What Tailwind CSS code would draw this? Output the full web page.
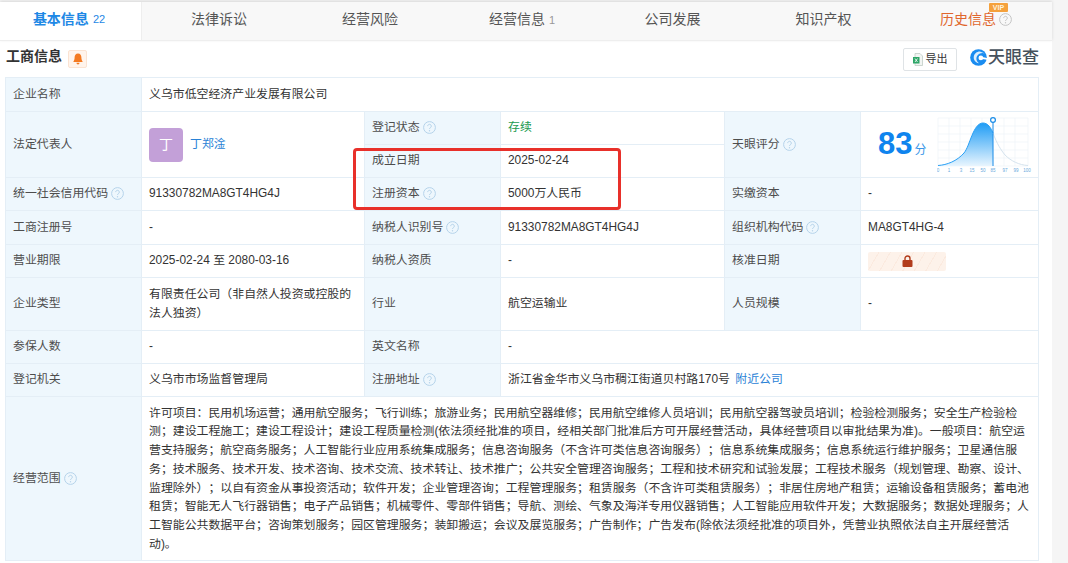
<!DOCTYPE html>
<html lang="zh-CN">
<head>
  <meta charset="UTF-8" />
  <title>工商信息</title>
  <script src="https://cdn.jsdelivr.net/npm/@tailwindcss/browser@4"></script>
</head>
<body class="bg-[#f5f5f5] text-[#333] text-[11.9px] font-['Liberation_Sans','Noto_Sans_CJK_SC',sans-serif] [text-spacing-trim:space-all] overflow-hidden">

  <!-- shared help icon -->
  <svg class="hidden">
    <symbol id="help" viewBox="0 0 13 13">
      <circle cx="6.500" cy="6.500" r="5.900" fill="none" stroke="currentColor" />
      <path d="M4.700 5.100a1.800 1.800 0 1 1 2.800 1.500c-.7.4-1 .8-1 1.400" fill="none" stroke="currentColor" />
      <circle cx="6.500" cy="9.700" r=".7" fill="currentColor" />
    </symbol>
  </svg>

  <div class="relative w-[1052px] h-[563px] bg-white">
    <!-- Tabs -->
    <div class="h-[39px] mt-[2px] flex items-center bg-[#f8f8f8] border-b border-[#eee] text-[14px] text-[#555] shadow-[0_-1px_3px_rgba(0,0,0,0.12)]">
      <div class="w-[142px] h-full pb-[3px] flex items-center justify-center gap-1 pr-[3px] bg-white text-[#1e88e5] font-bold border-r border-[#eee]">基本信息 <span class="text-[11px] font-normal">22</span></div>
      <div class="w-[154px] pb-[3px] text-center">法律诉讼</div>
      <div class="w-[148px] pb-[3px] text-center">经营风险</div>
      <div class="w-[156px] pb-[3px] text-center">经营信息 <span class="text-[11px] text-[#999]">1</span></div>
      <div class="w-[145px] pb-[3px] text-center">公司发展</div>
      <div class="w-[157px] pb-[3px] text-center">知识产权</div>
      <div class="relative w-[148px] h-full pb-[3px] flex items-center justify-center gap-[3px] text-[#e0662d]">
        历史信息
        <svg class="w-[13px] h-[13px] text-[#c4c4c4]"><use href="#help" /></svg>
        <span class="absolute top-[1px] left-[87px] w-[19px] h-[9px] rounded-[1px] bg-[#f5a13c] text-[#fff3df] text-[7px] leading-[9px] text-center font-bold">VIP</span>
      </div>
    </div>

    <!-- Section title -->
    <div class="h-[36px] flex items-center px-[6px]">
      <h2 class="mb-[5px] text-[14px] font-bold text-[#333]">工商信息</h2>
      <span class="ml-[6px] mt-[-1px] w-[19px] h-[18px] flex items-center justify-center bg-[#fff4ec] border border-[#fbe3d2] rounded-[2px]">
        <svg class="w-[10px] h-[12px]" viewBox="0 0 10 12"><path d="M5 .5c2.300 0 3.400 1.800 3.400 4 0 2 .5 3 1.100 3.800v.7H.5v-.7c.6-.8 1.100-1.800 1.100-3.800 0-2.200 1.100-4 3.400-4zM3.500 9.800h3c0 1.100-.7 1.700-1.500 1.700s-1.500-.6-1.500-1.700z" fill="#f47a21" /></svg>
      </span>
      <button class="ml-auto w-[54px] h-[23px] flex items-center justify-center gap-[3px] border border-[#dfe3e6] rounded-[2px] text-[11px] text-[#333] bg-white">
        <svg class="w-[10px] h-[13px]" viewBox="0 0 10 13"><path d="M2 .5h5l2.500 2.500v9.500H2z" fill="#f2f5f3" stroke="#b9c6be" stroke-width=".7" /><rect x="0" y="4" width="6.500" height="6.500" fill="#2ea668" /><path d="M2 5.500l2.500 3.500M4.500 5.500L2 9" stroke="#fff" stroke-width=".8" /></svg>
        导出
      </button>
      <div class="ml-[13px] mr-[7px] mb-[3px] flex items-center gap-[1px]">
        <svg class="w-[17px] h-[17px]" viewBox="0 0 18 18">
          <circle cx="9" cy="9" r="8.800" fill="#1a8cf0" />
          <path d="M18 5.500C14 3.500 9.500 4 7.500 7.500c-1.500 2.800-.5 6 2 7.500-3.500-.3-6-3.500-5.500-6.800C4.600 4.800 7.500 2.500 11 2.800z" fill="#fff" opacity=".85" />
          <circle cx="11.500" cy="9.500" r="2.500" fill="#fff" />
          <path d="M13 8.500l5 1v2l-5-1z" fill="#fff" />
        </svg>
        <span class="text-[17px] font-medium text-[#46515c] leading-none">天眼查</span>
      </div>
    </div>

    <!-- Info table -->
    <table class="ml-[5px] w-[1034px] table-fixed border-collapse border border-[#e4eef6] [&_td]:border [&_td]:border-[#e4eef6] [&_td]:px-[7px] [&_td]:py-0 [&_td.l]:bg-[#eef7fd] [&_td.l]:text-[#4d4d4d]">
      <colgroup>
        <col class="w-[136px]" /><col class="w-[223px]" /><col class="w-[136px]" /><col class="w-[224px]" /><col class="w-[136px]" /><col />
      </colgroup>
      <tbody>
        <tr class="h-[34px]">
          <td class="l">企业名称</td>
          <td colspan="5">义乌市低空经济产业发展有限公司</td>
        </tr>
        <tr class="h-[33px]">
          <td class="l" rowspan="2">法定代表人</td>
          <td rowspan="2">
            <div class="flex items-center gap-[7px]">
              <span class="w-[34px] h-[34px] flex items-center justify-center rounded-[4px] bg-[#c3a0d8] text-white text-[14px]">丁</span>
              <a class="text-[#2a82d6]" href="#">丁郑淦</a>
            </div>
          </td>
          <td class="l">
            <span class="flex items-center gap-[3px]">登记状态 <svg class="w-[13px] h-[13px] text-[#b5d3ea]"><use href="#help" /></svg></span>
          </td>
          <td class="text-[#1a9a50]">存续</td>
          <td class="l" rowspan="2">
            <span class="flex items-center gap-[3px]">天眼评分 <svg class="w-[13px] h-[13px] text-[#b5d3ea]"><use href="#help" /></svg></span>
          </td>
          <td rowspan="2" class="relative">
            <div class="flex items-end h-[38px] mb-[2px] pl-[10px]">
              <span class="text-[31px] leading-[38px] font-bold text-[#0f84ee]">83</span>
              <span class="text-[12px] leading-[26px] ml-[2px] text-[#3c97e8]">分</span>
            </div>
            <svg class="absolute left-[76px] top-[5px] w-[96px] h-[58px]" viewBox="0 0 96 58">
              <defs>
                <linearGradient id="area" x1="0" y1="0" x2="0" y2="1">
                  <stop offset="0" stop-color="#1f9cf5" />
                  <stop offset="1" stop-color="#e8f5fe" />
                </linearGradient>
              </defs>
              <path d="M1 1h90v48H1z M1 9h90M1 17h90M1 25h90M1 33h90M1 41h90M12 1v48M23 1v48M34 1v48M45 1v48M56 1v48M67 1v48M78 1v48" fill="none" stroke="#eef3f8" stroke-width=".7" />
              <path d="M1 48.500C10 48 20 44 27 36 33 29 36 6 46 6c5 0 8 5 10 10v33H1z" fill="url(#area)" />
              <path d="M56 16c4 11 8 17 12 22 6 6 14 10 23 10.500" fill="none" stroke="#d5e3ee" />
              <path d="M1 48.500C10 48 20 44 27 36 33 29 36 6 46 6c5 0 8 5 10 10" fill="none" stroke="#2aa0f5" />
              <path d="M56 5v44" stroke="#1a8ce8" />
              <circle cx="56" cy="3" r="2.400" fill="#fff" stroke="#1a8ce8" stroke-width="1.200" />
              <text y="55" font-size="4.500" fill="#6aa9dc" font-family="Liberation Sans" text-anchor="middle">
                <tspan x="1">0</tspan><tspan x="12">1</tspan><tspan x="24">3</tspan><tspan x="35">15</tspan><tspan x="46">50</tspan><tspan x="56">85</tspan><tspan x="68">97</tspan><tspan x="79">99</tspan><tspan x="90">100</tspan>
              </text>
            </svg>
          </td>
        </tr>
        <tr class="h-[33px]">
          <td class="l">成立日期</td>
          <td>2025-02-24</td>
        </tr>
        <tr class="h-[33px]">
          <td class="l">
            <span class="flex items-center gap-[3px]">统一社会信用代码 <svg class="w-[13px] h-[13px] text-[#b5d3ea]"><use href="#help" /></svg></span>
          </td>
          <td>91330782MA8GT4HG4J</td>
          <td class="l">
            <span class="flex items-center gap-[3px]">注册资本 <svg class="w-[13px] h-[13px] text-[#b5d3ea]"><use href="#help" /></svg></span>
          </td>
          <td>5000万人民币</td>
          <td class="l">实缴资本</td>
          <td>-</td>
        </tr>
        <tr class="h-[34px]">
          <td class="l">工商注册号</td>
          <td>-</td>
          <td class="l">
            <span class="flex items-center gap-[3px]">纳税人识别号 <svg class="w-[13px] h-[13px] text-[#b5d3ea]"><use href="#help" /></svg></span>
          </td>
          <td>91330782MA8GT4HG4J</td>
          <td class="l">
            <span class="flex items-center gap-[3px]">组织机构代码 <svg class="w-[13px] h-[13px] text-[#b5d3ea]"><use href="#help" /></svg></span>
          </td>
          <td>MA8GT4HG-4</td>
        </tr>
        <tr class="h-[33px]">
          <td class="l">营业期限</td>
          <td>2025-02-24 至 2080-03-16</td>
          <td class="l">纳税人资质</td>
          <td>-</td>
          <td class="l">核准日期</td>
          <td>
            <div class="w-[78px] h-[19px] flex items-center justify-center rounded-[2px] bg-[repeating-linear-gradient(120deg,#fdf2ea_0,#fdf2ea_9px,#fbeadf_9px,#fbeadf_10px)]">
              <svg class="w-[11px] h-[12px]" viewBox="0 0 11 12"><path d="M3 5V3.500a2.500 2.500 0 0 1 5 0V5" fill="none" stroke="#b23c1c" stroke-width="1.400" /><rect x=".5" y="5" width="10" height="7" rx="1" fill="#b23c1c" /></svg>
            </div>
          </td>
        </tr>
        <tr class="h-[53px]">
          <td class="l">企业类型</td>
          <td class="leading-[19px]">有限责任公司（非自然人投资或控股的法人独资）</td>
          <td class="l">行业</td>
          <td>航空运输业</td>
          <td class="l">人员规模</td>
          <td>-</td>
        </tr>
        <tr class="h-[33px]">
          <td class="l">参保人数</td>
          <td>-</td>
          <td class="l">英文名称</td>
          <td colspan="3">-</td>
        </tr>
        <tr class="h-[33px]">
          <td class="l">登记机关</td>
          <td>义乌市市场监督管理局</td>
          <td class="l">
            <span class="flex items-center gap-[3px]">注册地址 <svg class="w-[13px] h-[13px] text-[#b5d3ea]"><use href="#help" /></svg></span>
          </td>
          <td colspan="3">浙江省金华市义乌市稠江街道贝村路170号 <a class="ml-[2px] text-[#2a82d6]" href="#">附近公司</a></td>
        </tr>
        <tr class="h-[164px]">
          <td class="l">
            <span class="flex items-center gap-[3px]">经营范围 <svg class="w-[13px] h-[13px] text-[#b5d3ea]"><use href="#help" /></svg></span>
          </td>
          <td colspan="5" class="leading-[18.7px] whitespace-nowrap">许可项目：民用机场运营；通用航空服务；飞行训练；旅游业务；民用航空器维修；民用航空维修人员培训；民用航空器驾驶员培训；检验检测服务；安全生产检验检<br />测；建设工程施工；建设工程设计；建设工程质量检测(依法须经批准的项目，经相关部门批准后方可开展经营活动，具体经营项目以审批结果为准)。一般项目：航空运<br />营支持服务；航空商务服务；人工智能行业应用系统集成服务；信息咨询服务（不含许可类信息咨询服务）；信息系统集成服务；信息系统运行维护服务；卫星通信服<br />务；技术服务、技术开发、技术咨询、技术交流、技术转让、技术推广；公共安全管理咨询服务；工程和技术研究和试验发展；工程技术服务（规划管理、勘察、设计、<br />监理除外）；以自有资金从事投资活动；软件开发；企业管理咨询；工程管理服务；租赁服务（不含许可类租赁服务）；非居住房地产租赁；运输设备租赁服务；蓄电池<br />租赁；智能无人飞行器销售；电子产品销售；机械零件、零部件销售；导航、测绘、气象及海洋专用仪器销售；人工智能应用软件开发；大数据服务；数据处理服务；人<br />工智能公共数据平台；咨询策划服务；园区管理服务；装卸搬运；会议及展览服务；广告制作；广告发布(除依法须经批准的项目外，凭营业执照依法自主开展经营活<br />动)。</td>
        </tr>
      </tbody>
    </table>

    <!-- Red annotation box drawn over the table -->
    <div class="absolute left-[353px] top-[146px] w-[268px] h-[62px] border-[3px] border-[#e8302a] rounded-[4px]"></div>
  </div>
</body>
</html>
